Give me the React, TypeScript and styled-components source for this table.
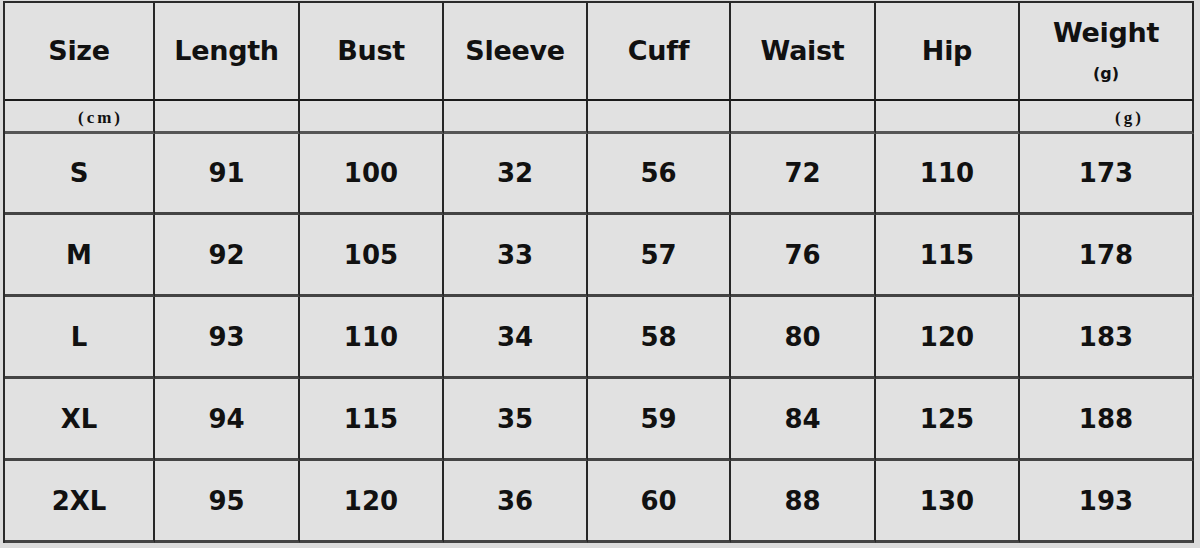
import React from 'react';
import styled, { createGlobalStyle } from 'styled-components';

const GlobalStyle = createGlobalStyle`
  html, body {
    margin: 0;
    padding: 0;
    background: #dcdcdc;
  }
`;

const Page = styled.div`
  width: 1200px;
  height: 548px;
  padding: 1px 0 0 3px;
  box-sizing: border-box;
  background: #dcdcdc;
  overflow: hidden;
`;

const Grid = styled.div`
  display: grid;
  grid-template-columns: 150px 145px 144px 144px 143px 145px 144px 174px;
  grid-template-rows: 98px 33px 81px 82px 82px 82px 82px;
  width: max-content;
  border-top: 2px solid #2a2a2a;
  border-left: 2px solid #2a2a2a;
  background: #e1e1e1;
`;

const Cell = styled.div<{ $line?: string; $thick?: number }>`
  box-sizing: border-box;
  display: flex;
  flex-direction: column;
  align-items: center;
  justify-content: center;
  border-right: 2px solid #262626;
  border-bottom: ${p => p.$thick ?? 2}px solid ${p => p.$line ?? '#3a3a3a'};
  background: #e1e1e1;
  color: #111;
`;

const HeadCell = styled(Cell)`
  padding-bottom: 2px;
`;

const HeadText = styled.span`
  font-family: "DejaVu Sans", "Liberation Sans", sans-serif;
  font-weight: bold;
  font-size: 27px;
  letter-spacing: -0.3px;
  line-height: 1;
`;

const Unit = styled.span`
  font-family: "DejaVu Sans", sans-serif;
  font-weight: bold;
  font-size: 16px;
  line-height: 1;
  margin-top: 20px;
`;

const SubCell = styled(Cell)<{ $align?: string; $pad?: number }>`
  align-items: ${p => p.$align ?? 'center'};
  padding-left: ${p => p.$pad ?? 0}px;
  justify-content: flex-end;
  padding-bottom: 3px;
`;

const SubText = styled.span`
  font-family: "Liberation Serif", "DejaVu Serif", serif;
  font-weight: bold;
  font-size: 17px;
  letter-spacing: 3px;
`;

const DataText = styled.span`
  font-family: "DejaVu Sans", "Liberation Sans", sans-serif;
  font-weight: bold;
  font-size: 26px;
`;

const headers = ['Size', 'Length', 'Bust', 'Sleeve', 'Cuff', 'Waist', 'Hip', 'Weight'];

const rows = [
  ['S', '91', '100', '32', '56', '72', '110', '173'],
  ['M', '92', '105', '33', '57', '76', '115', '178'],
  ['L', '93', '110', '34', '58', '80', '120', '183'],
  ['XL', '94', '115', '35', '59', '84', '125', '188'],
  ['2XL', '95', '120', '36', '60', '88', '130', '193'],
];

export default function App() {
  return (
    <Page>
      <GlobalStyle />
      <Grid>
        {headers.map(h => (
          <HeadCell key={h} $line="#1a1a1a">
            <HeadText>{h}</HeadText>
            {h === 'Weight' && <Unit>(g)</Unit>}
          </HeadCell>
        ))}
        {headers.map((h, i) => (
          <SubCell
            key={'sub' + h}
            $line="#555"
            $thick={3}
            $align={i === 0 || i === 7 ? 'flex-start' : 'center'}
            $pad={i === 0 ? 73 : i === 7 ? 95 : 0}
          >
            {i === 0 && <SubText>(cm)</SubText>}
            {i === 7 && <SubText>(g)</SubText>}
          </SubCell>
        ))}
        {rows.map((r, ri) =>
          r.map((v, ci) => (
            <Cell key={ri + '-' + ci} $line="#444" $thick={3}>
              <DataText>{v}</DataText>
            </Cell>
          ))
        )}
      </Grid>
    </Page>
  );
}
